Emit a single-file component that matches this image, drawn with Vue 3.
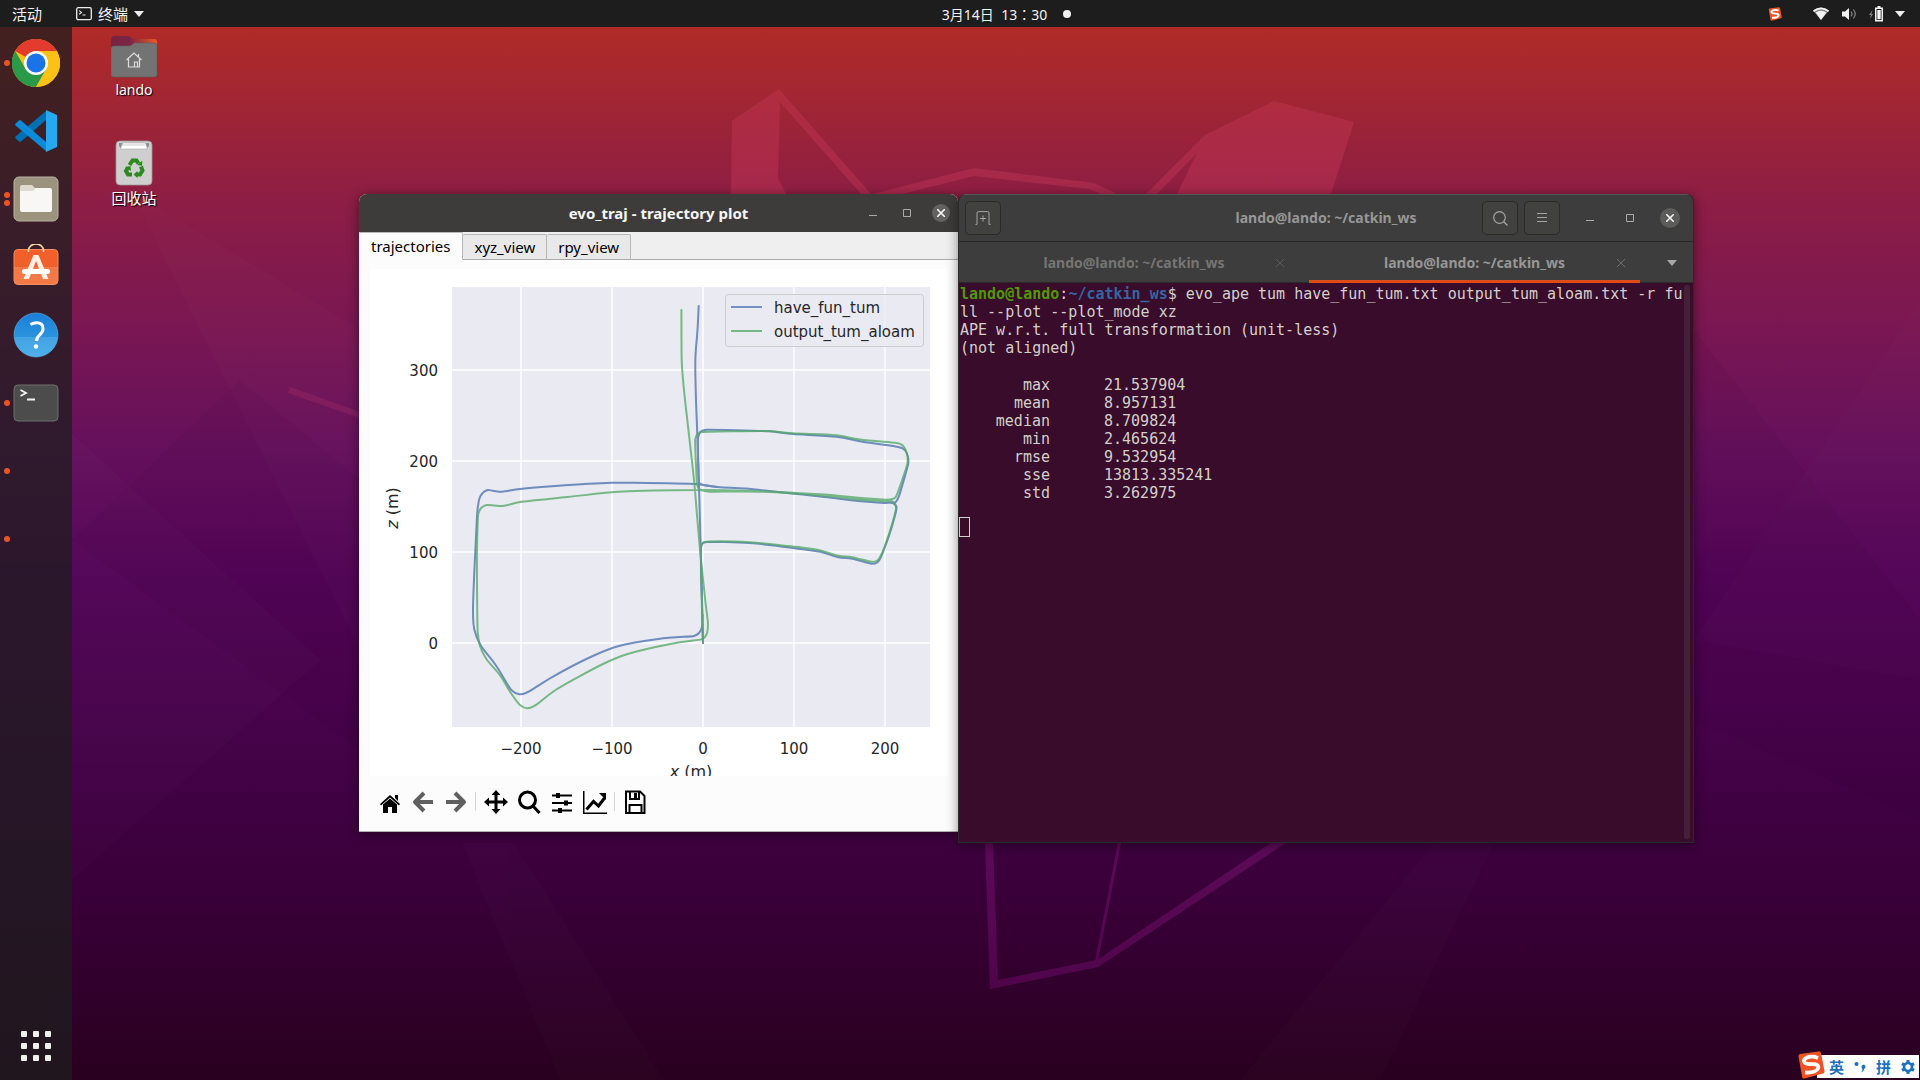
<script setup>
import { ref } from 'vue'

const GRID_X = [-200, -100, 0, 100, 200]
const GRID_Y = [0, 100, 200, 300]
const toX = (v) => 703 + v * 0.91
const toY = (v) => 643 - v * 0.91
const tick = (v) => String(v).replace('-', '−')

// Smooth curve through the points: each tangent bisects its two segments,
// and its handles follow the shorter of them, so long straights stay straight
function smooth(pts) {
  const last = pts.length - 1
  const seg = pts.slice(1).map((p, i) => {
    const dx = p[0] - pts[i][0]
    const dy = p[1] - pts[i][1]
    const len = Math.hypot(dx, dy) || 1
    return { x: dx / len, y: dy / len, len }
  })
  const handle = pts.map((p, i) => {
    const a = seg[Math.max(0, i - 1)]
    const b = seg[Math.min(last - 1, i)]
    const d = Math.hypot(a.x + b.x, a.y + b.y) || 1
    const h = Math.min(a.len, b.len) * 0.4
    return [((a.x + b.x) / d) * h, ((a.y + b.y) / d) * h]
  })
  let d = `M${pts[0][0]} ${pts[0][1]}`
  for (let i = 1; i <= last; i++) {
    const [x0, y0] = pts[i - 1]
    const [x1, y1] = pts[i]
    const c = [x0 + handle[i - 1][0], y0 + handle[i - 1][1], x1 - handle[i][0], y1 - handle[i][1]]
    d += `C${c.map((n) => n.toFixed(1)).join(' ')} ${x1} ${y1}`
  }
  return d
}

const blue = [
  [[698.7, 306], [697.5, 330], [695.4, 358], [695.8, 393], [697.5, 440], [698.8, 480], [700.2, 530], [701.5, 580], [703, 643]],
  [[702.8, 615], [702, 627], [699, 633], [694, 636], [658.4, 639], [619, 646], [595, 655], [551.7, 677.3], [528, 692], [519.2, 694.3], [511.3, 690], [496.3, 666], [480.5, 645], [474.4, 630], [473, 613.3], [475.7, 543.3], [477.7, 508], [480.5, 496], [486.8, 490.3], [493, 490.8], [502, 491.7], [520, 489], [555.6, 486], [611, 482.8], [634.7, 482.8], [698, 484.3], [717.7, 487], [745.4, 488.6], [785, 492.7], [824.5, 497], [864, 501.5], [883.8, 503], [893, 503], [896.5, 507], [893.5, 521], [883.8, 550], [880, 559], [877, 562.6], [871.2, 563.7], [852.2, 558.7], [838.3, 557.3], [820.5, 551.8], [785, 547], [749.4, 543], [709.8, 542], [703.1, 543], [700.9, 548], [702, 600], [703, 643]],
  [[893, 503], [896, 501.7], [898.8, 496.7], [908.3, 463.3], [908, 457], [905.6, 451], [902, 448.2], [892, 445.8], [864, 442], [836.4, 436.8], [792.9, 434], [769, 431.3], [705.9, 429.8], [700.5, 431.8], [698, 438], [698.8, 480], [699.5, 483.2], [703, 485], [717.7, 487]],
]
const green = [
  [[681.4, 310], [681.5, 340], [681.8, 363.3], [684, 390], [689, 435], [694, 480], [697, 515], [701, 560], [705, 598], [707.9, 623], [707.3, 632], [705, 637], [701, 639.4], [670.3, 644], [626.8, 654.3], [603, 664], [555.6, 690], [535.8, 705], [527.1, 708.3], [520, 705], [510, 691.7], [500.3, 675.7], [486.4, 659], [480, 646], [477.7, 632], [477, 550], [478.5, 513], [481.7, 507.4], [486.8, 505], [502.2, 506], [520, 502], [567.5, 497], [622.8, 491.6], [698, 490], [745, 490.7], [796.8, 493], [824.5, 494.6], [864, 498.3], [886, 499.7], [892.5, 499], [895.5, 497.2], [897.6, 493], [907.5, 463.3], [907.4, 456], [904.6, 448], [901.6, 444.6], [895, 442.7], [860, 439.6], [836.4, 435.2], [792.9, 433.3], [769, 431], [702, 432], [698, 433.5], [695.2, 439], [696.4, 473.3], [697.2, 485], [699, 488.7], [708, 491.5], [761, 491.7], [824, 495.7], [864, 500], [885, 501.3], [893, 501.7], [896, 507], [893, 521], [884.5, 547], [880, 557], [877, 560.8], [871.5, 561.8], [852.2, 557.2], [838.3, 555.7], [820.5, 550.4], [785, 545.7], [749.4, 542.3], [709.8, 541.6], [703.1, 542.5], [700.9, 547], [701.5, 590], [703, 643]],
]

const output = ['ll --plot --plot_mode xz', 'APE w.r.t. full transformation (unit-less)', '(not aligned)']
const stats = [
  ['max', '21.537904'],
  ['mean', '8.957131'],
  ['median', '8.709824'],
  ['min', '2.465624'],
  ['rmse', '9.532954'],
  ['sse', '13813.335241'],
  ['std', '3.262975'],
]
const plotTabs = ['trajectories', 'xyz_view', 'rpy_view']
const activePlot = ref('trajectories')
</script>

<template>
  <div class="screen">
    <header class="topbar">
      <div class="side">
        <button class="activities">活动</button>
        <button class="appmenu">
          <svg width="16" height="14" viewBox="0 0 16 14" fill="none" stroke="#eee"><rect x=".7" y=".7" width="14.6" height="12" rx="1.5" stroke-width="1.3" /><path d="M3.2 3.6l2.3 1.8-2.3 1.8M6.5 8h3" stroke-width="1.1" /></svg>
          <span>终端</span>
          <svg width="10" height="6" viewBox="0 0 10 6"><path d="M0 0h10L5 6z" fill="#eee" /></svg>
        </button>
      </div>
      <button class="clock">3月14日&nbsp; 13：30<i></i></button>
      <div class="side tray">
        <svg width="14" height="14" viewBox="0 0 28 28"><use href="#sogou" /></svg>
        <svg class="wifi" width="16" height="13" viewBox="0 0 16 13"><path d="M0 3.6Q8-2.8 16 3.6L8 13z" fill="#888" /><path d="M0 3.6Q8-2.8 16 3.6l-1 1.3Q8-.5 1 4.9zM2.6 5.6Q8 2 13.4 5.6L8 13z" fill="#f2f2f2" /></svg>
        <svg class="vol" width="15" height="14" viewBox="0 0 15 14"><path d="M0 4.5h3L7 1v12L3 9.500H0z" fill="#f2f2f2" /><path d="M9 4.500q2 2.500 0 5M11.400 2.500q3.600 4.500 0 9" stroke="#888" fill="none" stroke-width="1.200" /></svg>
        <svg class="bat" width="15" height="16" viewBox="0 0 15 16"><path d="M3.500 4L0 9h2L1 13l3-5H2.300z" fill="#888" /><path d="M8.500 0h3v1.500H14V15.500H6V1.500h2.500z" fill="#f2f2f2" /><path d="M7.500 3h5v11h-5z" fill="#1d1d1d" /><path d="M8.300 4h3.400v9.200H8.300z" fill="#f2f2f2" /></svg>
        <svg width="10" height="6" viewBox="0 0 10 6"><path d="M0 0h10L5 6z" fill="#eee" /></svg>
      </div>
    </header>

    <main class="desktop">
      <svg class="wallpaper" viewBox="0 27 1920 1053" preserveAspectRatio="xMidYMid slice">
        <defs>
          <linearGradient id="sky" x1="0" y1="0" x2="0" y2="1">
            <stop offset="0" stop-color="#b02b27" />
            <stop offset=".09" stop-color="#9d2437" />
            <stop offset=".17" stop-color="#8c1d45" />
            <stop offset=".28" stop-color="#7b1752" />
            <stop offset=".4" stop-color="#65105c" />
            <stop offset=".52" stop-color="#530457" />
            <stop offset=".64" stop-color="#48034c" />
            <stop offset=".8" stop-color="#3b003c" />
            <stop offset="1" stop-color="#29001f" />
          </linearGradient>
          <linearGradient id="fox" gradientUnits="userSpaceOnUse" x1="0" y1="90" x2="0" y2="986">
            <stop offset="0" stop-color="#b12d3f" />
            <stop offset=".12" stop-color="#a5284c" />
            <stop offset=".4" stop-color="#7a1b62" />
            <stop offset=".85" stop-color="#5c0a57" />
            <stop offset="1" stop-color="#50054b" />
          </linearGradient>
        </defs>
        <path d="M0 27h1920v1053H0z" fill="url(#sky)" />
        <g fill="#fff" opacity=".012">
          <path d="M72 434L320 660 72 880z" />
          <path d="M130 190L360 650V330z" />
          <path d="M1694 640L1920 300v380z" />
          <path d="M1434 843h60l-114 237H1240z" />
          <path d="M462 843h52l150 237H560z" />
        </g>
        <g fill="#200030" opacity=".05">
          <path d="M72 540L240 380l120 100v270z" />
          <path d="M1694 330l226 290v200l-226-100z" />
        </g>
        <g fill="url(#fox)">
          <path d="M732 121l47-32 92 105h-10l-81-92-2 76 8 16h-55z" />
          <path d="M873 194l101-26 120 15 23 11h-16l-12-5-115-13-72 18z" />
          <path d="M1146 194l59-59 69-34 80 21-23 72h-154l20-41-40 41z" />
          <path d="M290 387l70 25v6l-72-25z" />
          <path d="M985 843h8l5 137 99-20 174-117h15l-188 124-108 22z" />
          <path d="M1118 843h3l-23 118h-3z" />
        </g>
      </svg>

      <nav class="dock">
        <button class="app" aria-label="Chrome">
          <i class="run"></i>
          <svg width="48" height="48" viewBox="0 0 48 48"><circle cx="24" cy="24" r="24" fill="#fbc116" /><path d="M24 24L3.200 12A24 24 0 0 1 44.800 12z" fill="#e33b2e" /><path d="M3.200 12A24 24 0 0 0 24 48l10.400-18H13.600z" fill="#2a9a48" /><path d="M24 12H44.800A24 24 0 0 1 24 48l10.400-18z" fill="#fbc116" /><circle cx="24" cy="24" r="12" fill="#fff" /><circle cx="24" cy="24" r="9.500" fill="#1a73e8" /></svg>
        </button>
        <button class="app" aria-label="Code">
          <svg width="42" height="42" viewBox="0 0 42 42"><path d="M31 1v9L6 31.500q-1 .8-2 0L.6 28.600q-1-1 0-2z" fill="#0070b5" /><path d="M31 41v-9L6 10.500q-1-.8-2 0L.6 13.400q-1 1 0 2z" fill="#0a8ad8" /><path d="M31 0l11 5v32l-11 5z" fill="#27a9f2" /></svg>
        </button>
        <button class="app" aria-label="Files">
          <i class="run up"></i><i class="run down"></i>
          <svg width="46" height="46" viewBox="0 0 46 46"><rect x="1" y="1" width="44" height="44" rx="5" fill="#9c937f" stroke="#b9b3a4" /><path d="M7 11q0-2 2-2h10l3 3h14v5H7z" fill="#dedad0" /><path d="M7 15h13l3-3h14q2 0 2 2v20q0 2-2 2H9q-2 0-2-2z" fill="#f8f7f5" /></svg>
        </button>
        <button class="app" aria-label="Software">
          <svg width="46" height="46" viewBox="0 0 46 46"><defs><linearGradient id="bag" x2="0" y2="1"><stop offset=".5" stop-color="#f1602a" /><stop offset=".5" stop-color="#f37a47" /></linearGradient></defs><rect x="1" y="5.500" width="44" height="35" rx="4" fill="url(#bag)" stroke="#f58d5e" /><path d="M15.500 8V6.500a7.500 6.500 0 0 1 15 0V8" fill="none" stroke="#f6d9a5" stroke-width="1.600" /><path d="M20.500 11h5l10 24h-5.500l-7-18-7 18h-5.500z" fill="#fdeee6" /><rect x="9" y="25" width="28" height="5" rx="2.500" fill="#fff" /></svg>
        </button>
        <button class="app" aria-label="Help">
          <svg width="46" height="46" viewBox="0 0 46 46"><defs><linearGradient id="hp" x2="0" y2="1"><stop offset="0" stop-color="#1b7fd6" /><stop offset=".54" stop-color="#2b93df" /><stop offset=".55" stop-color="#42a2e4" /><stop offset="1" stop-color="#4fb0ec" /></linearGradient></defs><circle cx="23" cy="23" r="22" fill="url(#hp)" stroke="#5bb4ea" stroke-width=".6" /><path d="M17.500 12.500q3-1.700 6-1.700 6.500 0 6.500 5.700 0 3.500-3.300 6.300-3.200 2.700-3.200 6.200" fill="none" stroke="#fff" stroke-width="3" /><circle cx="23" cy="34.500" r="2.200" fill="#fff" /></svg>
        </button>
        <button class="app" aria-label="Terminal">
          <i class="run"></i>
          <svg width="46" height="38" viewBox="0 0 46 38"><rect x="1" y="1" width="44" height="36" rx="4" fill="#4c4c4c" stroke="#6f706c" /><path d="M7.500 6l5.500 3-5.500 3M14 15.500h8" fill="none" stroke="#f4f4f4" stroke-width="1.800" /></svg>
        </button>
        <div class="app"><i class="run"></i></div>
        <div class="app"><i class="run"></i></div>
        <button class="grid-btn" aria-label="Show applications"><i v-for="n in 9" :key="n"></i></button>
      </nav>

      <div class="shortcuts">
        <a href="#home" class="shortcut">
          <svg width="46" height="46" viewBox="0 0 46 46"><defs><linearGradient id="fb"><stop offset="0" stop-color="#77243f" /><stop offset=".4" stop-color="#7d2348" /><stop offset="1" stop-color="#ec5a24" /></linearGradient></defs><path d="M0 8q0-4 4-4h14l4 3h21q3 0 3 3v10H0z" fill="url(#fb)" /><path d="M0 17q0-3 3-3h15q2 0 4-2t4-1h17q3 0 3 3v28q0 3-3 3H3q-3 0-3-3z" fill="#737373" stroke="#5f5f5f" stroke-width=".6" /><path d="M15.500 28L23 21l7.500 7M17.500 27v8h11v-8M23.500 35v-5h3v5M27.500 22v3" fill="none" stroke="#ddd" stroke-width="1.200" /></svg>
          <span>lando</span>
        </a>
        <a href="#trash" class="shortcut">
          <svg width="38" height="46" viewBox="0 0 38 46"><rect x="1" y="1" width="36" height="44" rx="4" fill="#cfcfcf" stroke="#9a9a9a" stroke-width=".8" /><path d="M4 3h30v3l-3 3H7L4 6z" fill="#8e8e8e" /><path d="M7.500 3h23l2 6h-27z" fill="#fff" stroke="#999" stroke-width=".5" /><path d="M6 5h24" stroke="#aaa" stroke-width=".6" /><g fill="none" stroke="#2b8a1e" stroke-width="4"><path d="M14.500 25l3-4.500h4l2 3" /><path d="M26 26.500l1.500 4-2.500 4h-4" /><path d="M17 34.500h-4l-2-3.500 2-3.500" /></g><path d="M22 25l5 .8.300-5zM22.500 31v7l-4-3.500zM10 27l5.500-1 .5 5z" fill="#2b8a1e" /></svg>
          <span class="zh">回收站</span>
        </a>
      </div>

      <section class="win evo">
        <header class="evo-title">
          <h1>evo_traj - trajectory plot</h1>
          <div class="controls">
            <button aria-label="Minimize"><svg width="8" height="8"><path d="M0 6.500h8" stroke="#aaa" /></svg></button>
            <button aria-label="Maximize"><svg width="8" height="8"><path d="M.5.5h7v7h-7z" fill="none" stroke="#aaa" /></svg></button>
            <button class="close" aria-label="Close"><svg width="8" height="8"><path d="M0 0l8 8M8 0L0 8" stroke="#fff" stroke-width="1.500" /></svg></button>
          </div>
        </header>
        <div class="plot-tabs">
          <button v-for="t in plotTabs" :key="t" :class="{ on: t === activePlot }" @click="activePlot = t">{{ t }}</button>
        </div>
        <div class="plot-page">
          <svg class="canvas" viewBox="370 269 578 507">
            <path d="M370 269h578v507H370z" fill="#fff" />
            <path d="M452 287h478v440H452z" fill="#eaeaf2" />
            <g stroke="#fff" stroke-width="1.400">
              <path v-for="v in GRID_X" :key="v" :d="`M${toX(v)} 287v440`" />
              <path v-for="v in GRID_Y" :key="v" :d="`M452 ${toY(v)}h478`" />
            </g>
            <g fill="none" stroke-width="2" stroke-linecap="round" opacity=".78">
              <path v-for="(p, i) in blue" :key="i" :d="smooth(p)" stroke="#4c72b0" />
            </g>
            <g fill="none" stroke-width="2" stroke-linecap="round" opacity=".78">
              <path v-for="(p, i) in green" :key="i" :d="smooth(p)" stroke="#55a868" />
            </g>
            <rect x="725.500" y="294.500" width="198" height="52" rx="3" fill="#eaeaf2" fill-opacity=".8" stroke="#ccc" />
            <path d="M731 307h31" stroke="#7590c5" stroke-width="2" />
            <path d="M731 331h31" stroke="#75b885" stroke-width="2" />
            <g class="ink">
              <text x="774" y="313">have_fun_tum</text>
              <text x="774" y="337">output_tum_aloam</text>
              <text v-for="v in GRID_Y" :key="v" x="438" :y="toY(v) + 6" text-anchor="end">{{ tick(v) }}</text>
              <text v-for="v in GRID_X" :key="v" :x="toX(v)" y="754" text-anchor="middle">{{ tick(v) }}</text>
              <text class="axis" x="691" y="777" text-anchor="middle"><tspan class="it">x</tspan> (m)</text>
              <text class="axis" transform="translate(398 508) rotate(-90)" text-anchor="middle"><tspan class="it">z</tspan> (m)</text>
            </g>
          </svg>
          <div class="tools">
            <button aria-label="Home"><svg viewBox="0 0 24 24"><path d="M2 14L12 5l10 9-1 1.500-9-8-9 8zM17 5h3v6l-3-3z" /><path d="M5 14.500l7-6 7 6V23h-5v-6h-4v6H5z" /></svg></button>
            <button aria-label="Back"><svg viewBox="0 0 24 24" fill="none" stroke="#606060" stroke-width="4" stroke-linejoin="round"><path d="M13 3l-9 9 9 9M4 12h18" /></svg></button>
            <button aria-label="Forward"><svg viewBox="0 0 24 24" fill="none" stroke="#606060" stroke-width="4" stroke-linejoin="round"><path d="M11 3l9 9-9 9M20 12H2" /></svg></button>
            <i></i>
            <button aria-label="Pan"><svg viewBox="0 0 24 24"><path d="M12 0l4.500 5H13.500v5.500H19v-3L24 12l-5 4.500v-3h-5.500V19h3L12 24l-4.500-5h3v-5.500H5v3L0 12l5-4.500v3h5.500V5h-3z" /></svg></button>
            <button aria-label="Zoom"><svg viewBox="0 0 24 24" fill="none" stroke="#000" stroke-width="3"><circle cx="10.500" cy="10" r="8" /><path d="M16 16l6.500 7" /></svg></button>
            <button aria-label="Subplots"><svg viewBox="0 0 24 24"><path d="M2 4.500h20v2H2zM2 12h20v2H2zM2 19.500h20v2H2zM6 3h4v5H6zM14 10.500h4v5h-4zM8 18h4v5H8z" /></svg></button>
            <button aria-label="Axes"><svg viewBox="0 0 24 24"><path d="M0 1h1.500v21.500H24V24H0z" /><path d="M3.500 19.500l7-8 5 4.500 6-8" fill="none" stroke="#000" stroke-width="3" /><path d="M16 3h7v7z" /></svg></button>
            <i></i>
            <button aria-label="Save"><svg viewBox="0 0 24 24" fill="none" stroke="#000" stroke-width="2"><path d="M3 1.500h14l4.500 4.500v17H3z" /><path d="M6.500 23v-8h12v8" /><path d="M7 2v7h9V2" /><path d="M12.500 3v5" stroke-width="3" /></svg></button>
          </div>
        </div>
      </section>

      <section class="win term">
        <header class="term-title">
          <button class="box" aria-label="New tab"><svg width="16" height="14" viewBox="0 0 16 14" fill="none" stroke="#a5a5a3"><path d="M.5 13.400h1.500V2q0-1.400 1.400-1.400h9.200Q14 .6 14 2v11.400h1.500M8 4.500v6M5 7.500h6" /></svg></button>
          <h1>lando@lando: ~/catkin_ws</h1>
          <div class="right">
            <button class="box" aria-label="Search"><svg width="15" height="15" viewBox="0 0 15 15" fill="none" stroke="#a5a5a3" stroke-width="1.200"><circle cx="6.500" cy="6.500" r="5.800" /><path d="M10.500 10.500l4 4" /></svg></button>
            <button class="box" aria-label="Menu"><svg width="12" height="10" viewBox="0 0 12 10" stroke="#a5a5a3"><path d="M1 .5h10M1 4.500h10M1 8.500h10" /></svg></button>
            <button class="ctl" aria-label="Minimize"><svg width="8" height="8"><path d="M0 6.500h8" stroke="#aaa" /></svg></button>
            <button class="ctl" aria-label="Maximize"><svg width="8" height="8"><path d="M.5.5h7v7h-7z" fill="none" stroke="#aaa" /></svg></button>
            <button class="ctl" aria-label="Close"><span><svg width="8" height="8"><path d="M0 0l8 8M8 0L0 8" stroke="#fff" stroke-width="1.500" /></svg></span></button>
          </div>
        </header>
        <div class="term-tabs">
          <div class="ttab first"><button>lando@lando: ~/catkin_ws</button><button class="x" aria-label="Close tab"><svg width="8" height="8"><path d="M0 0l8 8M8 0L0 8" /></svg></button></div>
          <div class="ttab on"><button>lando@lando: ~/catkin_ws</button><button class="x" aria-label="Close tab"><svg width="8" height="8"><path d="M0 0l8 8M8 0L0 8" /></svg></button></div>
          <button class="more" aria-label="Tab list"><svg width="10" height="6" viewBox="0 0 10 6"><path d="M0 0h10L5 6z" fill="#a9a9a7" /></svg></button>
        </div>
        <div class="console">
          <div class="out">
            <p><b class="user">lando@lando</b>:<b class="path">~/catkin_ws</b>$ evo_ape tum have_fun_tum.txt output_tum_aloam.txt -r fu</p>
            <p v-for="line in output" :key="line">{{ line }}</p>
            <table>
              <tbody>
                <tr v-for="[name, value] in stats" :key="name">
                  <th scope="row">{{ name }}</th>
                  <td>{{ value }}</td>
                </tr>
              </tbody>
            </table>
            <div class="cursor"></div>
          </div>
          <div class="scroll"></div>
        </div>
      </section>

      <div class="ime">
        <svg class="logo" width="28" height="28" viewBox="0 0 28 28">
          <g id="sogou"><path d="M1.500 5.500Q1 3.500 3 3L21.500.4q2-.3 2.500 1.600l3.500 18q.4 2-1.500 2.400L7.500 27.400q-2 .5-2.400-1.400z" fill="#ee5326" /><path d="M21 7q-6-2.400-11-.4-4.500 2-2.500 4.800 1.600 1.800 8 1.800 7 0 5.500 4.300-2.300 4.600-13 4" fill="none" stroke="#fff" stroke-width="3.800" /></g>
        </svg>
        <button>英</button>
        <button aria-label="Punctuation"><svg width="12" height="12" viewBox="0 0 12 12" fill="#1c70c0"><circle cx="2.500" cy="3" r="2" /><path d="M7.500 6a2 2 0 1 1 3 1.500Q10 10.500 7 11.500q1.500-1.800 1.500-3.500Q7.300 7.500 7.500 6z" /></svg></button>
        <button>拼</button>
        <button aria-label="Settings"><svg width="14" height="14" viewBox="-7 -7 14 14"><circle r="4" fill="none" stroke="#1c70c0" stroke-width="2.600" /><path v-for="a in 6" :key="a" d="M-1.600-6.900h3.200v3h-3.200z" fill="#1c70c0" :transform="`rotate(${a * 60})`" /></svg></button>
      </div>
    </main>
  </div>
</template>

<style>
body {
  margin: 0;
  background: #29001f;
}
</style>

<style scoped>
.screen {
  display: flex;
  flex-direction: column;
  min-height: 100vh;
  overflow: hidden;
  font-family: 'Noto Sans', 'Noto Sans CJK SC', sans-serif;
  font-size: 15px;
}
button {
  margin: 0;
  padding: 0;
  border: 0;
  background: none;
  color: inherit;
  font: inherit;
}
h1 {
  margin: 0;
  font-size: 14px;
  font-weight: 700;
}
p {
  margin: 0;
  white-space: pre;
}
svg {
  display: block;
}
.topbar {
  display: flex;
  align-items: center;
  height: 27px;
  background: #1d1d1d;
  color: #f2f2f2;
}
.side {
  display: flex;
  flex: 1;
  align-items: center;
}
.activities {
  width: 64px;
  padding-left: 12px;
  box-sizing: border-box;
  text-align: left;
}
.appmenu {
  display: flex;
  align-items: center;
  gap: 6px;
  margin-left: 12px;
}
.clock {
  display: flex;
  align-items: center;
  gap: 16px;
  padding-left: 108px;
  font-family: 'Noto Sans', 'Noto Sans CJK TC', sans-serif;
  font-size: 14px;
  white-space: nowrap;
}
.clock i {
  width: 8px;
  height: 8px;
  border-radius: 50%;
  background: #f2f2f2;
}
.tray {
  justify-content: flex-end;
  padding-right: 15px;
}
.wifi {
  margin-left: 31px;
}
.vol {
  margin-left: 13px;
}
.bat {
  margin: 0 11px 0 12px;
}
.desktop {
  position: relative;
  display: flex;
  flex: 1;
}
.wallpaper {
  position: absolute;
  inset: 0;
  width: 100%;
  height: 100%;
}
.dock {
  position: relative;
  display: flex;
  flex-direction: column;
  align-items: center;
  width: 72px;
  padding-top: 2px;
  background: rgba(30, 30, 30, 0.74);
}
.app {
  position: relative;
  display: flex;
  align-items: center;
  justify-content: center;
  width: 72px;
  height: 68px;
}
.run {
  position: absolute;
  left: 4px;
  top: 31px;
  width: 6px;
  height: 6px;
  border-radius: 50%;
  background: #e95420;
}
.run.up {
  top: 27px;
}
.run.down {
  top: 35px;
}
.grid-btn {
  display: grid;
  grid-template-columns: repeat(3, 6px);
  gap: 6px;
  margin: auto 0 19px;
}
.grid-btn i {
  height: 6px;
  border-radius: 1px;
  background: #f0f0ee;
}
.shortcuts {
  position: relative;
  display: flex;
  flex-direction: column;
  gap: 37px;
  width: 124px;
  padding-top: 5px;
}
.shortcut {
  display: flex;
  flex-direction: column;
  align-items: center;
  gap: 1px;
  height: 71px;
  color: #fff;
  line-height: 22px;
  text-decoration: none;
  text-shadow: 1px 1px 1px #000;
}
.shortcut span {
  font-size: 14px;
}
.shortcut .zh {
  font-size: 15px;
}
.win {
  position: absolute;
  display: flex;
  flex-direction: column;
  overflow: hidden;
  border-radius: 8px 8px 0 0;
  box-shadow: 0 2px 12px rgba(0, 0, 0, 0.45);
}
.evo {
  left: 359px;
  top: 167px;
  width: 599px;
  background: #fcfcfc;
}
.evo-title {
  position: relative;
  display: flex;
  align-items: center;
  justify-content: center;
  height: 38px;
  background: #3e3c3a;
  color: #f6f5f4;
}
.evo-title h1 {
  font-size: 15px;
  line-height: 38px;
}
.controls {
  position: absolute;
  right: 8px;
  top: 10px;
  display: flex;
  gap: 16px;
}
.controls button {
  display: flex;
  align-items: center;
  justify-content: center;
  width: 18px;
  height: 18px;
  border-radius: 50%;
}
.controls .close {
  background: #636261;
}
.plot-tabs {
  display: flex;
  align-items: flex-end;
  height: 28px;
  box-sizing: border-box;
  background: #efefef;
  box-shadow: inset 0 -1px #ababab;
}
.plot-tabs button {
  height: 26px;
  padding: 0 11px;
  border: solid #b8b8b8;
  border-width: 1px 1px 1px 0;
  border-bottom-color: #ababab;
  border-radius: 2px 2px 0 0;
  background: #e9e9e9;
  color: #000;
}
.plot-tabs .on {
  height: 28px;
  padding: 0 12px;
  border-bottom-color: #fcfcfc;
  background: #fcfcfc;
}
.plot-page {
  padding: 9px 10px 0 11px;
  border-bottom: 1px solid #b0b0b0;
}
.canvas {
  width: 100%;
}
.ink {
  fill: #262626;
  font-family: 'DejaVu Sans', sans-serif;
  font-size: 15px;
}
.axis {
  font-size: 16px;
}
.it {
  font-style: italic;
}
.tools {
  display: flex;
  align-items: center;
  height: 51px;
  padding: 0 0 4px 3px;
}
.tools button {
  display: flex;
  justify-content: center;
  width: 33px;
}
.tools svg {
  width: 24px;
  height: 24px;
}
.tools i {
  width: 1px;
  height: 19px;
  margin: 0 3px;
  background: #d6d6d6;
}
.term {
  left: 958px;
  top: 167px;
  width: 736px;
  height: 649px;
  box-sizing: border-box;
  border: 1px solid #2a2a28;
  border-width: 0 1px 1px;
  background: #380c2a;
}
.term-title {
  position: relative;
  display: flex;
  align-items: center;
  justify-content: space-between;
  height: 48px;
  box-sizing: border-box;
  padding: 0 3px 0 6px;
  border-top: 1px solid #555;
  border-bottom: 1px solid #272725;
  background: #3d3d3d;
  color: #979795;
}
.term-title h1 {
  position: absolute;
  inset: 0;
  line-height: 46px;
  text-align: center;
  pointer-events: none;
}
.box {
  display: flex;
  align-items: center;
  justify-content: center;
  width: 36px;
  height: 34px;
  border: 1px solid #2a2a28;
  border-radius: 5px;
  background: #414140;
}
.right {
  display: flex;
  align-items: center;
}
.right .box {
  margin-right: 6px;
}
.right .box + .box {
  margin-right: 10px;
}
.ctl {
  display: flex;
  align-items: center;
  justify-content: center;
  width: 40px;
  height: 34px;
}
.ctl span {
  padding: 6px;
  border-radius: 50%;
  background: #5c5c5b;
}
.term-tabs {
  display: flex;
  height: 41px;
  background: #3d3d3d;
  font-size: 14px;
  font-weight: 700;
  box-shadow: inset 0 -1px #2a2a28;
}
.ttab {
  position: relative;
  display: flex;
  flex: 331;
  align-items: center;
  justify-content: center;
  color: #757573;
}
.ttab.first {
  flex: 350;
}
.ttab.on {
  box-shadow: inset 0 -3px #e04c18;
  color: #979795;
}
.x {
  position: absolute;
  right: 15px;
  stroke: #5c5c5a;
}
.first .x {
  right: 25px;
}
.on .x {
  stroke: #6c6c6a;
}
.more {
  display: flex;
  align-items: center;
  justify-content: center;
  width: 53px;
  padding-left: 10px;
  box-sizing: border-box;
}
.console {
  display: flex;
  flex: 1;
  justify-content: space-between;
  padding: 2px 3px 3px 1px;
  color: #d3d0cb;
  font: 15px/18px 'DejaVu Sans Mono', monospace;
}
.user {
  color: #4e9a06;
}
.path {
  color: #3465a4;
}
table {
  margin: 19px 0 15px;
  border-collapse: collapse;
}
th {
  width: 90px;
  padding: 0;
  font-weight: 400;
  text-align: right;
}
td {
  padding: 0 0 0 54px;
}
.cursor {
  width: 9px;
  height: 18px;
  margin-left: -1px;
  border: 1px solid #d3d0cb;
}
.scroll {
  width: 6px;
  border-radius: 3px;
  background: #45203a;
}
.ime {
  position: absolute;
  right: 1px;
  bottom: 2px;
  display: flex;
  align-items: center;
  justify-content: space-between;
  width: 86px;
  height: 23px;
  padding: 0 4px 0 12px;
  background: #fff;
  color: #1c70c0;
  font-size: 15px;
  font-weight: 700;
}
.logo {
  position: absolute;
  left: -20px;
  top: -4px;
}
</style>
